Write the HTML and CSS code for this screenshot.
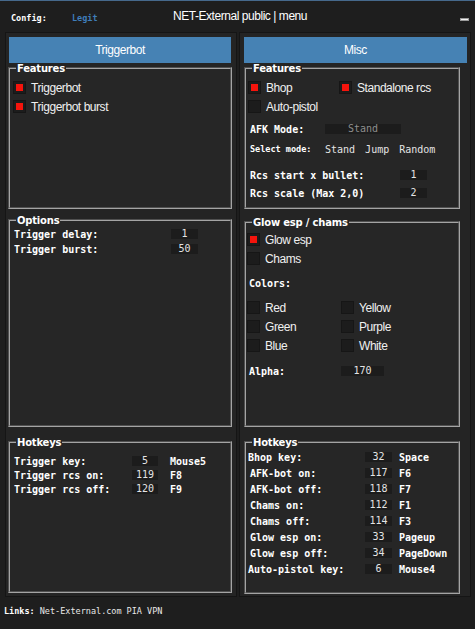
FILE: index.html
```html
<!DOCTYPE html>
<html lang="en">
<head>
  <meta charset="UTF-8">
  <meta name="viewport" content="width=device-width, initial-scale=1.0">
  <title>NET-External public | menu</title>
  <link rel="stylesheet" href="styles.css">
</head>
<body>
  <div class="window">
    <header class="titlebar">
      <div class="config">
        <span class="config-label">Config:</span>
        <span class="config-value">Legit</span>
      </div>
      <div class="title">NET-External public | menu</div>
      <div class="controls"><span class="minimize"></span></div>
    </header>

    <main class="columns">
      <!-- Triggerbot column -->
      <section class="panel panel-left">
        <button class="tab">Triggerbot</button>

        <div class="group g-features-left">
          <span class="group-title">Features</span>
          <div class="check-list">
            <label class="check-row"><span class="check on"></span>Triggerbot</label>
            <label class="check-row"><span class="check on"></span>Triggerbot burst</label>
          </div>
        </div>

        <div class="group g-options">
          <span class="group-title">Options</span>
          <div class="field-row"><span class="field-label w-157">Trigger delay:</span><span class="value-box w-27">1</span></div>
          <div class="field-row"><span class="field-label w-157">Trigger burst:</span><span class="value-box w-27">50</span></div>
        </div>

        <div class="group g-hotkeys-left">
          <span class="group-title">Hotkeys</span>
          <div class="hotkey-row left"><span class="field-label w-118">Trigger key:</span><span class="value-box w-26">5</span><span class="key-name">Mouse5</span></div>
          <div class="hotkey-row left"><span class="field-label w-118">Trigger rcs on:</span><span class="value-box w-26">119</span><span class="key-name">F8</span></div>
          <div class="hotkey-row left"><span class="field-label w-118">Trigger rcs off:</span><span class="value-box w-26">120</span><span class="key-name">F9</span></div>
        </div>
      </section>

      <!-- Misc column -->
      <section class="panel panel-right">
        <button class="tab">Misc</button>

        <div class="group g-features-right">
          <span class="group-title">Features</span>
          <div class="check-row-pair">
            <label class="check-row col-91"><span class="check on"></span>Bhop</label>
            <label class="check-row"><span class="check on"></span>Standalone rcs</label>
          </div>
          <label class="check-row mt-6"><span class="check"></span>Auto-pistol</label>

          <div class="field-row text-row mt-10">
            <span class="field-label w-75">AFK Mode:</span>
            <span class="value-box w-76 muted">Stand</span>
          </div>
          <div class="field-row text-row mt-8">
            <span class="field-label small w-75">Select mode:</span>
            <span class="modes"><span>Stand</span><span>Jump</span><span>Random</span></span>
          </div>
          <div class="field-row text-row mt-14">
            <span class="field-label w-150">Rcs start x bullet:</span>
            <span class="value-box w-27">1</span>
          </div>
          <div class="field-row text-row mt-6">
            <span class="field-label w-150">Rcs scale (Max 2,0)</span>
            <span class="value-box w-27">2</span>
          </div>
        </div>

        <div class="group g-glow">
          <span class="group-title">Glow esp / chams</span>
          <label class="check-row"><span class="check on"></span>Glow esp</label>
          <label class="check-row mt-6"><span class="check"></span>Chams</label>

          <div class="field-row text-row mt-12"><span class="field-label">Colors:</span></div>

          <div class="color-grid">
            <label class="check-row"><span class="check"></span>Red</label>
            <label class="check-row"><span class="check"></span>Yellow</label>
            <label class="check-row"><span class="check"></span>Green</label>
            <label class="check-row"><span class="check"></span>Purple</label>
            <label class="check-row"><span class="check"></span>Blue</label>
            <label class="check-row"><span class="check"></span>White</label>
          </div>

          <div class="field-row text-row mt-13">
            <span class="field-label w-92">Alpha:</span>
            <span class="value-box w-43">170</span>
          </div>
        </div>

        <div class="group g-hotkeys-right">
          <span class="group-title">Hotkeys</span>
          <div class="hotkey-row right"><span class="field-label w-117">Bhop key:</span><span class="value-box w-27">32</span><span class="key-name">Space</span></div>
          <div class="hotkey-row right"><span class="field-label w-117 ind">AFK-bot on:</span><span class="value-box w-27">117</span><span class="key-name">F6</span></div>
          <div class="hotkey-row right"><span class="field-label w-117 ind">AFK-bot off:</span><span class="value-box w-27">118</span><span class="key-name">F7</span></div>
          <div class="hotkey-row right"><span class="field-label w-117 ind">Chams on:</span><span class="value-box w-27">112</span><span class="key-name">F1</span></div>
          <div class="hotkey-row right"><span class="field-label w-117 ind">Chams off:</span><span class="value-box w-27">114</span><span class="key-name">F3</span></div>
          <div class="hotkey-row right"><span class="field-label w-117 ind">Glow esp on:</span><span class="value-box w-27">33</span><span class="key-name">Pageup</span></div>
          <div class="hotkey-row right"><span class="field-label w-117 ind">Glow esp off:</span><span class="value-box w-27">34</span><span class="key-name">PageDown</span></div>
          <div class="hotkey-row right"><span class="field-label w-117">Auto-pistol key:</span><span class="value-box w-27">6</span><span class="key-name">Mouse4</span></div>
        </div>
      </section>
    </main>

    <footer class="links">
      <span class="links-label">Links:</span>
      <span>Net-External.com</span>
      <span>PIA VPN</span>
    </footer>
  </div>
</body>
</html>
```

FILE: styles.css
```css
* {
  box-sizing: border-box;
}

body {
  margin: 0;
  padding: 0;
  background: #1e1e1e;
  color: #fff;
  font-family: "DejaVu Sans Mono", monospace;
}

.window {
  width: 475px;
  height: 629px;
  border-top: 1px solid #46698c;
  background: #1e1e1e;
  display: flex;
  flex-direction: column;
}

/* title bar */
.titlebar {
  height: 31px;
  display: grid;
  grid-template-columns: 1fr auto 1fr;
  align-items: center;
  padding: 0 6px 0 11px;
}

.config {
  display: flex;
  align-items: center;
  padding-top: 2px;
  font-size: 8.5px;
  font-weight: bold;
}

.config-label {
  width: 61px;
  color: #fff;
}

.config-value {
  color: #3f7dba;
}

.title {
  font-family: "Liberation Sans", Arial, sans-serif;
  font-size: 12px;
  letter-spacing: -0.45px;
  color: #fff;
  padding-bottom: 2px;
}

.controls {
  display: flex;
  justify-content: flex-end;
}

.minimize {
  display: block;
  width: 9px;
  height: 3px;
  margin-top: 5px;
  background: #f2f2f2;
  border: 1px solid #9a9a9a;
}

/* columns */
.columns {
  display: flex;
  gap: 2px;
  padding-left: 5px;
  height: 565px;
}

.panel {
  height: 565px;
  width: 232px;
  background: #242424;
  border: 1px solid #151515;
  padding-top: 4px;
  display: flex;
  flex-direction: column;
}

.panel-left {
  padding-left: 2px;
  padding-right: 4px;
}

.panel-right {
  width: 232px;
  padding-left: 4px;
  padding-right: 2px;
}

.tab {
  height: 26px;
  border: none;
  border-radius: 0;
  background: #4682b4;
  color: #fff;
  font-family: "Liberation Sans", Arial, sans-serif;
  font-size: 12px;
  letter-spacing: -0.45px;
  padding: 0;
  cursor: pointer;
}

.panel-left .tab {
  margin: 0 1px;
}

.panel-right .tab {
  width: 223px;
}

/* group boxes */
.group {
  position: relative;
  border: 2px groove #a4a4a4;
  background: #262626;
  margin-top: 4px;
  flex-shrink: 0;
}

.group-title {
  position: absolute;
  top: -6px;
  left: 6px;
  padding: 0 1px;
  background: linear-gradient(#242424 40%, #262626 40%);
  font-family: "DejaVu Sans", Verdana, sans-serif;
  font-weight: bold;
  font-size: 10px;
  line-height: 12px;
  letter-spacing: -0.2px;
  color: #fff;
}

.panel-right .group {
  width: 216px;
}

.g-features-left {
  height: 142px;
  padding: 12px 4px 0 3px;
}

.g-options {
  height: 208px;
  margin-top: 10px;
  padding: 7px 4px 0 4px;
  display: flex;
  flex-direction: column;
  gap: 3px;
}

.g-hotkeys-left {
  height: 152px;
  margin-top: 14px;
  padding: 12px 4px 0 4px;
  display: flex;
  flex-direction: column;
  gap: 2px;
}

.g-features-right {
  height: 142px;
  padding: 12px 2px 0 2px;
}

.g-glow {
  height: 206px;
  margin-top: 12px;
  padding: 10px 2px 0 1px;
}

.g-hotkeys-right {
  height: 153px;
  margin-top: 14px;
  padding: 8px 2px 0 2px;
  display: flex;
  flex-direction: column;
  gap: 4px;
}

/* checkboxes */
.check-list {
  display: flex;
  flex-direction: column;
  gap: 6px;
}

.check-row {
  display: flex;
  align-items: center;
  height: 13px;
  font-family: "Liberation Sans", Arial, sans-serif;
  font-size: 12px;
  letter-spacing: -0.45px;
  color: #f0f0f0;
}

.check {
  width: 13px;
  height: 13px;
  margin-right: 5px;
  background: #1c1c1c;
  border: 1px solid #161616;
  display: flex;
  align-items: center;
  justify-content: center;
  flex-shrink: 0;
}

.check.on::after {
  content: "";
  width: 7px;
  height: 7px;
  background: #f5140c;
}

.check-row-pair {
  display: flex;
}

.col-91 {
  width: 91px;
}

.color-grid {
  display: grid;
  grid-template-columns: 94px 1fr;
  row-gap: 6px;
  margin-top: 12px;
}

/* label / value rows */
.field-row {
  display: flex;
  align-items: center;
  height: 12px;
}

.text-row {
  padding-left: 2px;
}

.field-label {
  font-weight: bold;
  font-size: 10px;
  color: #fff;
  white-space: nowrap;
  flex-shrink: 0;
}

.field-label.small {
  font-size: 8.5px;
}

.value-box {
  height: 10px;
  background: #1c1c1c;
  font-size: 10px;
  line-height: 10px;
  color: #e4e4e4;
  text-align: center;
  flex-shrink: 0;
}

.value-box.muted {
  color: #8e8e8e;
}

.modes {
  display: flex;
  gap: 10px;
  font-size: 10px;
  color: #e4e4e4;
}

.hotkey-row {
  display: flex;
  align-items: center;
  height: 12px;
}

.hotkey-row.left .key-name {
  margin-left: 12px;
}

.hotkey-row.right .key-name {
  margin-left: 7px;
}

.key-name {
  font-weight: bold;
  font-size: 10px;
  color: #fff;
}

.ind {
  padding-left: 2px;
}

.w-26 { width: 26px; }
.w-27 { width: 27px; }
.w-43 { width: 43px; }
.w-75 { width: 75px; }
.w-76 { width: 76px; }
.w-92 { width: 92px; }
.w-117 { width: 117px; }
.w-118 { width: 118px; }
.w-150 { width: 150px; }
.w-157 { width: 157px; }

.mt-6 { margin-top: 6px; }
.mt-8 { margin-top: 8px; }
.mt-10 { margin-top: 10px; }
.mt-12 { margin-top: 12px; }
.mt-13 { margin-top: 13px; }
.mt-14 { margin-top: 14px; }

/* footer */
.links {
  padding: 9px 0 0 4px;
  font-size: 8.5px;
  color: #e8e8e8;
  display: flex;
  gap: 5px;
}

.links-label {
  font-weight: bold;
  color: #fff;
}
```
